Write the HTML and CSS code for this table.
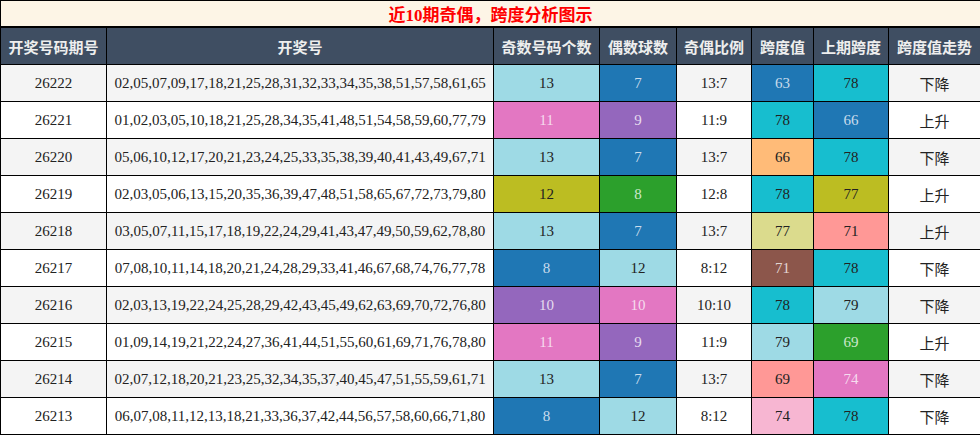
FILE: index.html
```html
<!DOCTYPE html>
<html lang="zh">
<head>
<meta charset="utf-8">
<title>近10期奇偶，跨度分析图示</title>
<link rel="stylesheet" href="styles.css">
</head>
<body>
<div class="board">
  <div class="title">近10期奇偶，跨度分析图示</div>
  <div class="grid">
    <div class="th">开奖号码期号</div>
    <div class="th">开奖号</div>
    <div class="th">奇数号码个数</div>
    <div class="th">偶数球数</div>
    <div class="th">奇偶比例</div>
    <div class="th">跨度值</div>
    <div class="th">上期跨度</div>
    <div class="th">跨度值走势</div>

    <div class="td alt">26222</div>
    <div class="td alt">02,05,07,09,17,18,21,25,28,31,32,33,34,35,38,51,57,58,61,65</div>
    <div class="td c-lcyan">13</div>
    <div class="td c-blue">7</div>
    <div class="td alt">13:7</div>
    <div class="td c-blue">63</div>
    <div class="td c-cyan">78</div>
    <div class="td alt cjk">下降</div>

    <div class="td">26221</div>
    <div class="td">01,02,03,05,10,18,21,25,28,34,35,41,48,51,54,58,59,60,77,79</div>
    <div class="td c-pink">11</div>
    <div class="td c-purple">9</div>
    <div class="td">11:9</div>
    <div class="td c-cyan">78</div>
    <div class="td c-blue">66</div>
    <div class="td cjk">上升</div>

    <div class="td alt">26220</div>
    <div class="td alt">05,06,10,12,17,20,21,23,24,25,33,35,38,39,40,41,43,49,67,71</div>
    <div class="td c-lcyan">13</div>
    <div class="td c-blue">7</div>
    <div class="td alt">13:7</div>
    <div class="td c-lorange">66</div>
    <div class="td c-cyan">78</div>
    <div class="td alt cjk">下降</div>

    <div class="td">26219</div>
    <div class="td">02,03,05,06,13,15,20,35,36,39,47,48,51,58,65,67,72,73,79,80</div>
    <div class="td c-olive">12</div>
    <div class="td c-green">8</div>
    <div class="td">12:8</div>
    <div class="td c-cyan">78</div>
    <div class="td c-olive">77</div>
    <div class="td cjk">上升</div>

    <div class="td alt">26218</div>
    <div class="td alt">03,05,07,11,15,17,18,19,22,24,29,41,43,47,49,50,59,62,78,80</div>
    <div class="td c-lcyan">13</div>
    <div class="td c-blue">7</div>
    <div class="td alt">13:7</div>
    <div class="td c-khaki">77</div>
    <div class="td c-lred">71</div>
    <div class="td alt cjk">上升</div>

    <div class="td">26217</div>
    <div class="td">07,08,10,11,14,18,20,21,24,28,29,33,41,46,67,68,74,76,77,78</div>
    <div class="td c-blue">8</div>
    <div class="td c-lcyan">12</div>
    <div class="td">8:12</div>
    <div class="td c-brown">71</div>
    <div class="td c-cyan">78</div>
    <div class="td cjk">下降</div>

    <div class="td alt">26216</div>
    <div class="td alt">02,03,13,19,22,24,25,28,29,42,43,45,49,62,63,69,70,72,76,80</div>
    <div class="td c-purple">10</div>
    <div class="td c-pink">10</div>
    <div class="td alt">10:10</div>
    <div class="td c-cyan">78</div>
    <div class="td c-lcyan">79</div>
    <div class="td alt cjk">下降</div>

    <div class="td">26215</div>
    <div class="td">01,09,14,19,21,22,24,27,36,41,44,51,55,60,61,69,71,76,78,80</div>
    <div class="td c-pink">11</div>
    <div class="td c-purple">9</div>
    <div class="td">11:9</div>
    <div class="td c-lcyan">79</div>
    <div class="td c-green">69</div>
    <div class="td cjk">上升</div>

    <div class="td alt">26214</div>
    <div class="td alt">02,07,12,18,20,21,23,25,32,34,35,37,40,45,47,51,55,59,61,71</div>
    <div class="td c-lcyan">13</div>
    <div class="td c-blue">7</div>
    <div class="td alt">13:7</div>
    <div class="td c-lred">69</div>
    <div class="td c-pink">74</div>
    <div class="td alt cjk">下降</div>

    <div class="td">26213</div>
    <div class="td">06,07,08,11,12,13,18,21,33,36,37,42,44,56,57,58,60,66,71,80</div>
    <div class="td c-blue">8</div>
    <div class="td c-lcyan">12</div>
    <div class="td">8:12</div>
    <div class="td c-lpink">74</div>
    <div class="td c-cyan">78</div>
    <div class="td cjk">下降</div>
  </div>
</div>
</body>
</html>
```
FILE: styles.css
```css
html, body {
  margin: 0;
  padding: 0;
  background: #ffffff;
}

.board {
  width: 980px;
  box-sizing: border-box;
  background: #000000;
  padding: 1px 0 1px 1px;
  display: flex;
  flex-direction: column;
}

.title {
  height: 25px;
  margin-bottom: 2px;
  background: #fdf5e6;
  color: #ff0000;
  font-family: "Liberation Serif", "Noto Sans CJK SC", serif;
  font-weight: bold;
  font-size: 17px;
  display: flex;
  align-items: center;
  justify-content: center;
}

.grid {
  display: grid;
  grid-template-columns: 105px 386px 105px 76px 74px 61px 74px 91px;
  grid-auto-rows: 36px;
  gap: 1px;
}

.th {
  background: #3f4e62;
  color: #eeeeee;
  font-family: "Noto Sans CJK SC", sans-serif;
  font-weight: bold;
  font-size: 15px;
  display: flex;
  align-items: center;
  justify-content: center;
}

.td {
  background: #ffffff;
  color: #222222;
  font-family: "Liberation Serif", "Noto Sans CJK SC", serif;
  font-size: 15px;
  display: flex;
  align-items: center;
  justify-content: center;
  white-space: nowrap;
}

.td.alt { background: #f4f4f4; }
.td.cjk { font-family: "Noto Sans CJK SC", sans-serif; font-size: 15px; }

.c-lcyan  { background: #9edae5 !important; color: #222222; }
.c-blue   { background: #1f77b4 !important; color: #c9dcec; }
.c-cyan   { background: #17becf !important; color: #222222; }
.c-pink   { background: #e377c2 !important; color: #f6dcee; }
.c-purple { background: #9467bd !important; color: #e6dcef; }
.c-lorange{ background: #ffbb78 !important; color: #222222; }
.c-olive  { background: #bcbd22 !important; color: #222222; }
.c-green  { background: #2ca02c !important; color: #cde8cd; }
.c-khaki  { background: #dbdb8d !important; color: #222222; }
.c-lred   { background: #ff9896 !important; color: #222222; }
.c-brown  { background: #8c564b !important; color: #e2d4d1; }
.c-lpink  { background: #f7b6d2 !important; color: #222222; }
```
